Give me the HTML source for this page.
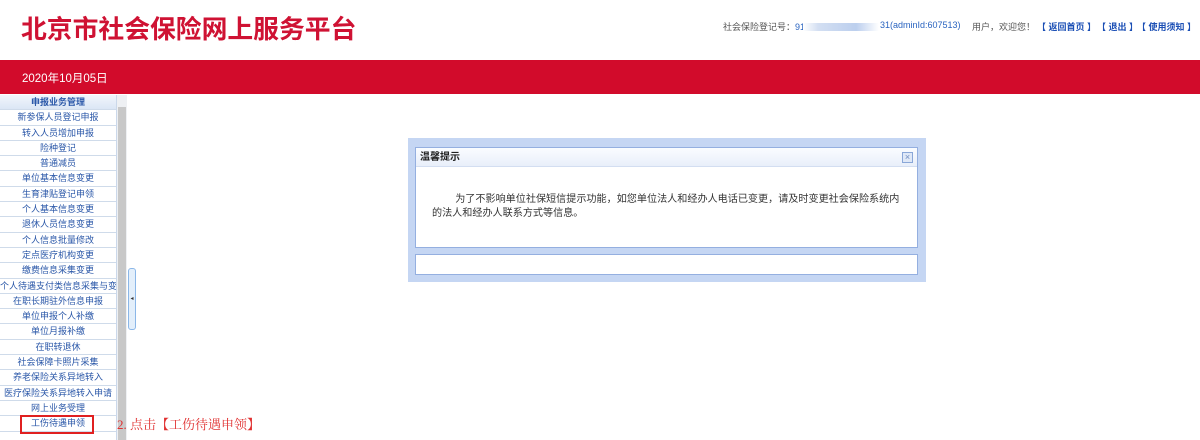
<!DOCTYPE html>
<html><head><meta charset="utf-8"><style>
*{margin:0;padding:0;box-sizing:border-box}
body{width:1200px;height:440px;overflow:hidden;background:#fff;font-family:"Liberation Sans","Noto Sans CJK SC",sans-serif;position:relative}
.title{position:absolute;left:21px;top:9px;font-size:25.8px;font-weight:bold;color:#cf1233;white-space:nowrap}
.i{position:absolute;top:20px;font-size:9px;color:#555;white-space:nowrap}
.b{color:#2a64c0}
.l{color:#1b4fb5;font-weight:bold}
.blur{position:absolute;left:803px;top:23px;width:76px;height:8px;background:linear-gradient(90deg,#fff,#d3dff2 20%,#bccfee 70%,#fff)}
.band{position:absolute;left:0;top:60px;width:1200px;height:34px;background:#d20b2b}
.date{position:absolute;left:22px;top:70px;color:#fff;font-size:11.5px}
.side{position:absolute;left:0;top:95px;width:117px;height:345px;background:#fff;border-right:1px solid #cbd8ea}
.side div{height:15.3px;line-height:15px;font-size:9px;text-align:center;color:#2a57a8;border-bottom:1px solid #cfdbea;white-space:nowrap;overflow:hidden;background:#fff}
.side div.h{background:linear-gradient(#f2f6fc,#dbe6f5);font-weight:bold}
.sb{position:absolute;left:117px;top:95px;width:10px;height:345px;background:#eef0f3}
.sb i{position:absolute;left:1px;top:12px;width:8px;height:333px;background:#c8c8c8}
.tab{position:absolute;left:128px;top:268px;width:8px;height:62px;border:1px solid #8bb7e8;border-radius:3px;background:#e3effb;font-size:6px;color:#333;line-height:60px;text-align:center}
.red{position:absolute;left:20px;top:415px;width:74px;height:19px;border:2px solid #e02020}
.note{position:absolute;left:117px;top:414px;color:#e03030;font-size:13px;font-family:"Liberation Serif","Noto Serif CJK SC",serif;white-space:nowrap}
.dlg{position:absolute;left:408px;top:138px;width:518px;height:144px;background:#c5d6f3}
.pan{position:absolute;left:7px;top:9px;width:503px;height:101px;background:#fff;border:1px solid #94afe0}
.tt{height:19px;background:linear-gradient(#fafcff,#e9effa);border-bottom:1px solid #d3def1;font-size:10px;font-weight:bold;color:#222;line-height:19px;padding-left:4px}
.x{position:absolute;right:4px;top:4px;width:11px;height:11px;border:1px solid #8aa7d8;background:#dfe8f7;font-size:9px;line-height:9px;text-align:center;color:#6f8cc0}
.msg{font-size:10.1px;color:#333;padding:26px 14px 0 16px;line-height:14px;text-indent:2.3em}
.ft{position:absolute;left:7px;top:116px;width:503px;height:21px;background:#fff;border:1px solid #94afe0}
</style></head><body>
<div class="title">北京市社会保险网上服务平台</div>
<div class="i" style="left:723px">社会保险登记号：<span class="b">91</span></div>
<div class="blur"></div>
<div class="i b" style="left:880px">31(adminId:607513)</div>
<div class="i" style="left:972px">用户，欢迎您！</div>
<div class="i l" style="left:1037px">【 返回首页 】</div>
<div class="i l" style="left:1097px">【 退出 】</div>
<div class="i l" style="left:1137px">【 使用须知 】</div>
<div class="band"></div>
<div class="date">2020年10月05日</div>
<div class="side">
<div class="h">申报业务管理</div>
<div>新参保人员登记申报</div><div>转入人员增加申报</div><div>险种登记</div><div>普通减员</div><div>单位基本信息变更</div><div>生育津贴登记申领</div><div>个人基本信息变更</div><div>退休人员信息变更</div><div>个人信息批量修改</div><div>定点医疗机构变更</div><div>缴费信息采集变更</div><div>个人待遇支付类信息采集与变更</div><div>在职长期驻外信息申报</div><div>单位申报个人补缴</div><div>单位月报补缴</div><div>在职转退休</div><div>社会保障卡照片采集</div><div>养老保险关系异地转入</div><div>医疗保险关系异地转入申请</div><div>网上业务受理</div><div>工伤待遇申领</div>
</div>
<div class="sb"><i></i></div>
<div class="tab">◂</div>
<div class="red"></div>
<div class="note">2. 点击【工伤待遇申领】</div>
<div class="dlg">
<div class="pan"><div class="tt">温馨提示</div><div class="x">×</div>
<div class="msg">为了不影响单位社保短信提示功能，如您单位法人和经办人电话已变更，请及时变更社会保险系统内的法人和经办人联系方式等信息。</div></div>
<div class="ft"></div>
</div>
</body></html>
